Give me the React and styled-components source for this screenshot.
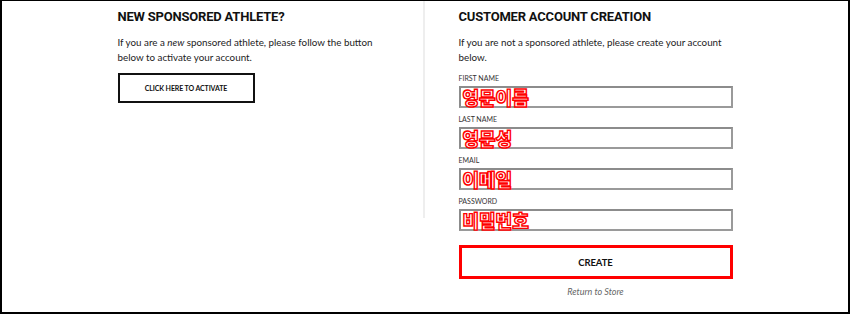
import React from 'react';
import styled, { createGlobalStyle } from 'styled-components';

const GlobalStyle = createGlobalStyle`
  html, body {
    margin: 0;
    padding: 0;
    background: #fff;
  }
  * {
    box-sizing: border-box;
  }
`;

const Page = styled.div`
  width: 850px;
  height: 314px;
  border: 2px solid #000;
  border-top-width: 1px;
  display: flex;
  justify-content: center;
  font-family: Lato, "Liberation Sans", sans-serif;
  color: #222;
  overflow: hidden;
`;

const Columns = styled.div`
  display: flex;
  align-items: flex-start;
  width: 617px;
  margin-left: 2px;
`;

const Column = styled.section`
  width: ${p => p.$width}px;
  min-height: ${p => p.$minHeight || 0}px;
  padding: 6px 0 0 ${p => p.$pad || 0}px;
  border-right: ${p => (p.$divider ? '2px solid #eeeeee' : 'none')};
`;

const Heading = styled.h2`
  margin: 0;
  font-family: Roboto, "Liberation Sans", sans-serif;
  font-weight: 700;
  font-size: 13px;
  line-height: 20px;
  letter-spacing: -0.2px;
  color: #111;
  text-transform: uppercase;
`;

const Intro = styled.p`
  margin: 8px 0 0;
  font-size: 9.8px;
  line-height: 15px;
  width: 268px;
  color: #222;
  em {
    font-style: italic;
  }
`;

const OutlineButton = styled.button`
  display: flex;
  align-items: center;
  justify-content: center;
  width: ${p => p.$width}px;
  height: ${p => p.$height}px;
  margin-top: ${p => p.$top}px;
  background: #fff;
  border: ${p => p.$border};
  font-family: Lato, "Liberation Sans", sans-serif;
  font-weight: 700;
  font-size: ${p => p.$size}px;
  color: #111;
  text-transform: uppercase;
  letter-spacing: -0.1px;
  padding: 0;
  cursor: pointer;
`;

const Form = styled.form`
  display: flex;
  flex-direction: column;
  margin-top: 8px;
`;

const Field = styled.label`
  display: flex;
  flex-direction: column;
  margin-bottom: 6px;
`;

const Label = styled.span`
  font-size: 7px;
  line-height: 11px;
  color: #333;
  text-transform: uppercase;
  margin-bottom: 2px;
`;

const InputBox = styled.div`
  width: 274px;
  height: 22px;
  border: 2px solid #9a9a9a;
  border-top-color: #8c8c8c;
  border-left-color: #8c8c8c;
  display: flex;
  align-items: center;
  padding-left: 2px;
`;

const Hangul = styled.span`
  font-family: "Noto Sans CJK KR", sans-serif;
  font-weight: 900;
  font-size: 18px;
  line-height: 18px;
  color: #fff;
  -webkit-text-stroke: 1.4px #ff0000;
  letter-spacing: 0;
  white-space: nowrap;
`;

const ReturnLink = styled.a`
  display: block;
  width: 274px;
  margin-top: 7px;
  text-align: center;
  font-size: 9px;
  line-height: 11px;
  font-style: italic;
  color: #666;
  text-decoration: none;
`;

const fields = [
  { label: 'First Name', value: '영문이름' },
  { label: 'Last Name', value: '영문성' },
  { label: 'Email', value: '이메일' },
  { label: 'Password', value: '비밀번호' },
];

export default function App() {
  return (
    <>
      <GlobalStyle />
      <Page>
        <Columns>
          <Column $width={307} $minHeight={217} $divider>
            <Heading>New Sponsored Athlete?</Heading>
            <Intro>
              If you are a <em>new</em> sponsored athlete, please follow the button below to activate your account.
            </Intro>
            <OutlineButton $width={137} $height={30} $top={8} $size={7} $border="2px solid #111">
              Click here to activate
            </OutlineButton>
          </Column>
          <Column $width={310} $pad={34}>
            <Heading>Customer Account Creation</Heading>
            <Intro>
              If you are not a sponsored athlete, please create your account below.
            </Intro>
            <Form onSubmit={e => e.preventDefault()}>
              {fields.map(f => (
                <Field key={f.label}>
                  <Label>{f.label}</Label>
                  <InputBox>
                    <Hangul>{f.value}</Hangul>
                  </InputBox>
                </Field>
              ))}
              <OutlineButton $width={274} $height={34} $top={8} $size={9.5} $border="3px solid #ff0000">
                Create
              </OutlineButton>
              <ReturnLink href="#">Return to Store</ReturnLink>
            </Form>
          </Column>
        </Columns>
      </Page>
    </>
  );
}
